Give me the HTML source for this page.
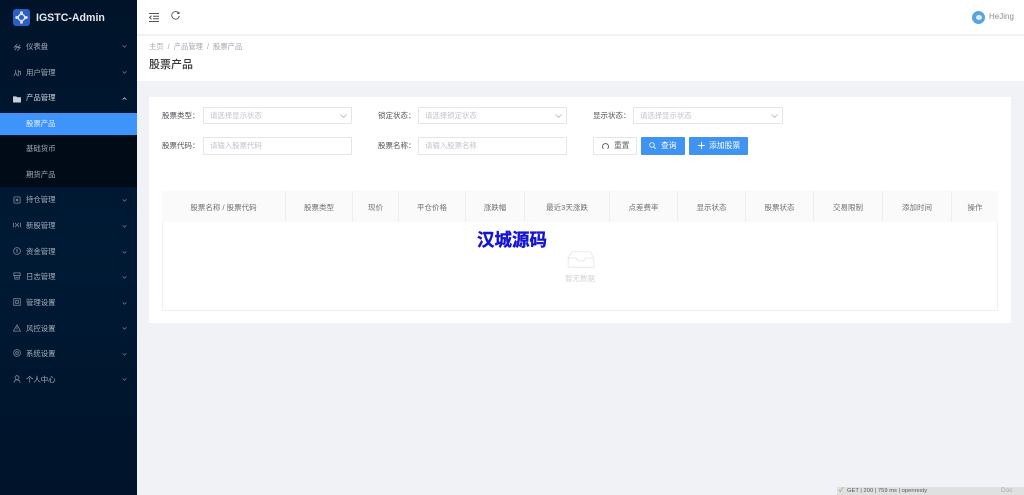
<!DOCTYPE html>
<html lang="zh-CN"><head><meta charset="utf-8"><title>股票产品</title>
<style>
*{box-sizing:border-box;margin:0;padding:0}
html,body{width:1024px;height:495px;overflow:hidden;background:#f0f2f5;font-family:"Liberation Sans","Noto Sans CJK SC",sans-serif}
#all{position:absolute;left:0;top:0;width:1024px;height:495px;filter:blur(.35px)}
.a{position:absolute;white-space:nowrap}
#side{position:absolute;left:0;top:0;width:137px;height:495px;background:linear-gradient(#001329,#001a35 50%,#00132a)}
.mi{position:absolute;left:26px;font-size:7.4px;line-height:12px;color:#a3adb9;white-space:nowrap}
.ic{position:absolute;left:13px;width:8px;height:8px;stroke:#7f8b99;fill:none;stroke-width:.9}
.ch{position:absolute;left:122px;width:5px;height:3px;stroke:#6f7c8b;fill:none;stroke-width:1}
.lb{position:absolute;font-size:7.5px;line-height:12px;color:#4f5257;white-space:nowrap}
.inp{position:absolute;height:17px;width:149px;background:#fff;border:1px solid #e3e5ea;border-radius:1px;font-size:7.4px;line-height:15px;padding-left:6px;color:#bfc3ca;white-space:nowrap}
.inp svg{position:absolute;right:4px;top:6px;width:7px;height:4px;stroke:#c0c4cc;fill:none}
.btn{position:absolute;top:137px;height:18px;border-radius:1px;font-size:7.8px;line-height:18px;white-space:nowrap;background:#3f94f2;color:#fff}
.th{position:absolute;top:191px;height:31px;border-right:1px solid #edeef0;font-size:7.5px;line-height:33px;text-align:center;color:#6c7076;white-space:nowrap;overflow:hidden}
</style></head><body><div id="all">
<div id="side">
<div class="a" style="left:13px;top:9px;width:17px;height:17px;border-radius:3px;background:#2d5fc4"></div>
<svg class="a" style="left:13px;top:9px" width="17" height="17" viewBox="0 0 17 17"><circle cx="8.5" cy="8.5" r="3.2" fill="none" stroke="#dfe8fa" stroke-width="1.4"/><circle cx="8.5" cy="3.8" r="1.5" fill="#dfe8fa"/><circle cx="8.5" cy="13.2" r="1.5" fill="#dfe8fa"/><circle cx="3.8" cy="8.5" r="1.5" fill="#dfe8fa"/><circle cx="13.2" cy="8.5" r="1.5" fill="#dfe8fa"/></svg>
<div class="a" style="left:36px;top:11px;font-size:10.6px;line-height:14px;font-weight:700;color:#e4e8ee">IGSTC-Admin</div>

<svg class="ic" style="top:43px" viewBox="0 0 9 9"><path d="M5 1 1.5 4.5 5 4 2 8M8 2 5.500 5 8 5 5 8.500"/></svg><div class="mi" style="top:41px">仪表盘</div>
<svg class="ch" style="top:45px" viewBox="0 0 6 4"><path d="M.5.5 3 3 5.500.5"/></svg>
<svg class="ic" style="top:69px" viewBox="0 0 9 9"><path d="M3 1V4L1 8M3 4 5 8M6 1V8M6 3H8.500V7"/></svg><div class="mi" style="top:67px">用户管理</div>
<svg class="ch" style="top:71px" viewBox="0 0 6 4"><path d="M.5.5 3 3 5.500.5"/></svg>
<svg class="ic" style="top:95px" viewBox="0 0 9 9"><path d="M.5 2H3.500L4.500 3H8.500V8H.5Z" fill="#c8d0da" stroke="#c8d0da"/></svg><div class="mi" style="top:92px;color:#d3d8df">产品管理</div>
<svg class="ch" style="top:97px;stroke:#d3d8df" viewBox="0 0 6 4"><path d="M.5 3.500 3 1 5.500 3.500"/></svg>

<div class="a" style="left:0;top:136px;width:137px;height:51px;background:#000b18"></div>
<div class="a" style="left:0;top:113px;width:137px;height:22px;background:#3f94fb"></div>
<div class="mi" style="top:118px;color:#eaf3ff">股票产品</div>
<div class="mi" style="top:143px">基础货币</div>
<div class="mi" style="top:169px">期货产品</div>

<svg class="ic" style="top:196px" viewBox="0 0 9 9"><rect x="1" y="1" width="7" height="7" rx="1"/><path d="M3 3 6 6M6 3 3 6"/></svg><div class="mi" style="top:194px">持仓管理</div>
<svg class="ch" style="top:199px" viewBox="0 0 6 4"><path d="M.5.5 3 3 5.500.5"/></svg>
<svg class="ic" style="top:221px" viewBox="0 0 9 9"><path d="M.5 2V7M2.500 2 4 4.500 2.500 7M8.500 2V7M6.500 2 5 4.500 6.500 7"/></svg><div class="mi" style="top:220px">新股管理</div>
<svg class="ch" style="top:225px" viewBox="0 0 6 4"><path d="M.5.5 3 3 5.500.5"/></svg>
<svg class="ic" style="top:247px" viewBox="0 0 9 9"><circle cx="4.500" cy="4.500" r="3.800"/><path d="M4.500 2.500V6.500M3.500 3.500H5.500"/></svg><div class="mi" style="top:246px">资金管理</div>
<svg class="ch" style="top:251px" viewBox="0 0 6 4"><path d="M.5.5 3 3 5.500.5"/></svg>
<svg class="ic" style="top:272px" viewBox="0 0 9 9"><path d="M1 1H8V4H1ZM2 4V8H7V4M3 6H6"/></svg><div class="mi" style="top:271px">日志管理</div>
<svg class="ch" style="top:276px" viewBox="0 0 6 4"><path d="M.5.5 3 3 5.500.5"/></svg>
<svg class="ic" style="top:298px" viewBox="0 0 9 9"><rect x=".8" y=".8" width="7.400" height="7.400"/><path d="M3 3H6V6H3Z"/></svg><div class="mi" style="top:297px">管理设置</div>
<svg class="ch" style="top:302px" viewBox="0 0 6 4"><path d="M.5.5 3 3 5.500.5"/></svg>
<svg class="ic" style="top:324px" viewBox="0 0 9 9"><path d="M4.500 1 8.500 8H.5ZM4.500 3.500V6"/></svg><div class="mi" style="top:323px">风控设置</div>
<svg class="ch" style="top:327px" viewBox="0 0 6 4"><path d="M.5.5 3 3 5.500.5"/></svg>
<svg class="ic" style="top:349px" viewBox="0 0 9 9"><circle cx="4.500" cy="4.500" r="3.800"/><circle cx="4.500" cy="4.500" r="1.500"/></svg><div class="mi" style="top:348px">系统设置</div>
<svg class="ch" style="top:353px" viewBox="0 0 6 4"><path d="M.5.5 3 3 5.500.5"/></svg>
<svg class="ic" style="top:375px" viewBox="0 0 9 9"><circle cx="4.500" cy="3" r="2.200"/><path d="M1 8.500C1.500 6 3 5.500 4.500 5.500S7.500 6 8 8.500"/></svg><div class="mi" style="top:374px">个人中心</div>
<svg class="ch" style="top:378px" viewBox="0 0 6 4"><path d="M.5.5 3 3 5.500.5"/></svg>
</div>

<div class="a" style="left:137px;top:0;width:887px;height:35px;background:#fff;border-bottom:1px solid #f0f1f3"></div>
<svg class="a" style="left:149px;top:13px" width="10" height="9" viewBox="0 0 10 9" fill="none" stroke="#555" stroke-width="1"><path d="M0 .5H10M4 3.200H10M4 5.800H10M0 8.500H10M2.500 2.800 .5 4.500 2.500 6.200"/></svg>
<svg class="a" style="left:171px;top:11px" width="9" height="9" viewBox="0 0 9 9" fill="none" stroke="#555" stroke-width=".9"><path d="M7.700 2.200A3.800 3.800 0 1 0 8.300 5"/><path d="M8 .6V2.600H6"/></svg>
<div class="a" style="left:972px;top:11px;width:13px;height:13px;border-radius:50%;background:#5ba3dc"></div>
<div class="a" style="left:976px;top:15px;width:6px;height:5px;border-radius:50%;background:#dcecf8"></div>
<div class="a" style="left:989px;top:11px;font-size:8px;line-height:12px;color:#8a8d92">HeJing</div>

<div class="a" style="left:137px;top:36px;width:887px;height:45px;background:#fff"></div>
<div class="a" style="left:149px;top:41px;font-size:7.300px;line-height:11px;color:#a3a6ab">主页 &nbsp;/&nbsp; 产品管理 &nbsp;/&nbsp; 股票产品</div>
<div class="a" style="left:149px;top:58px;font-size:11px;line-height:14px;font-weight:500;color:#33363a">股票产品</div>

<div class="a" style="left:149px;top:97px;width:862px;height:226px;background:#fff"></div>
<div class="lb" style="left:162px;top:110px">股票类型：</div>
<div class="inp" style="left:203px;top:107px">请选择显示状态<svg viewBox="0 0 7 4"><path d="M.5.5 3.500 3.500 6.500.5"/></svg></div>
<div class="lb" style="left:378px;top:110px">锁定状态：</div>
<div class="inp" style="left:418px;top:107px">请选择锁定状态<svg viewBox="0 0 7 4"><path d="M.5.5 3.500 3.500 6.500.5"/></svg></div>
<div class="lb" style="left:593px;top:110px">显示状态：</div>
<div class="inp" style="left:633px;top:107px;width:150px">请选择显示状态<svg viewBox="0 0 7 4"><path d="M.5.5 3.500 3.500 6.500.5"/></svg></div>
<div class="lb" style="left:162px;top:140px">股票代码：</div>
<div class="inp" style="left:203px;top:137px;height:18px;line-height:16px">请输入股票代码</div>
<div class="lb" style="left:378px;top:140px">股票名称：</div>
<div class="inp" style="left:418px;top:137px;height:18px;line-height:16px">请输入股票名称</div>

<div class="btn" style="left:593px;width:44px;background:#fff;border:1px solid #e3e5ea;color:#606266;line-height:16px;padding-left:20px">重置</div>
<svg class="a" style="left:602px;top:142px" width="7" height="8" viewBox="0 0 7 8" fill="none" stroke="#555" stroke-width=".9"><path d="M1.500 6.800A3 3 0 1 1 5.500 6.800"/></svg>
<div class="btn" style="left:641px;width:44px;padding-left:20px">查询</div>
<svg class="a" style="left:649px;top:142px" width="7" height="7" viewBox="0 0 7 7" fill="none" stroke="#e6f1ff" stroke-width=".9"><circle cx="3" cy="3" r="2.300"/><path d="M4.800 4.800 6.800 6.800"/></svg>
<div class="btn" style="left:689px;width:59px;padding-left:20px">添加股票</div>
<svg class="a" style="left:698px;top:142px" width="7" height="7" viewBox="0 0 7 7" stroke="#fff" stroke-width="1"><path d="M3.500 0V7M0 3.500H7"/></svg>

<div class="a" style="left:162px;top:191px;width:836px;height:120px;border:1px solid #eff0f2;border-top:0"></div>
<div class="a" style="left:162px;top:191px;width:836px;height:31px;background:#fafafa"></div>
<div class="th" style="left:162px;width:124px">股票名称 / 股票代码</div>
<div class="th" style="left:286px;width:67px">股票类型</div>
<div class="th" style="left:353px;width:46px">现价</div>
<div class="th" style="left:399px;width:67px">平仓价格</div>
<div class="th" style="left:466px;width:59px">涨跌幅</div>
<div class="th" style="left:525px;width:85px">最近3天涨跌</div>
<div class="th" style="left:610px;width:68px">点差费率</div>
<div class="th" style="left:678px;width:68px">显示状态</div>
<div class="th" style="left:746px;width:68px">股票状态</div>
<div class="th" style="left:814px;width:69px">交易限制</div>
<div class="th" style="left:883px;width:69px">添加时间</div>
<div class="th" style="left:952px;width:46px;border-right:0">操作</div>

<svg class="a" style="left:566px;top:248px" width="30" height="22" viewBox="0 0 32 24" fill="none" stroke="#e6e7ea" stroke-width="1"><path d="M6 4H26L30 11V21H2V11ZM2 11H11L13 14H19L21 11H30"/></svg>
<div class="a" style="left:565px;top:273px;font-size:7.5px;line-height:12px;color:#d0d2d6">暂无数据</div>
<div class="a" style="left:477px;top:230px;font-size:17.500px;line-height:20px;font-weight:700;color:#1414d2;-webkit-text-stroke:.4px #1414d2">汉城源码</div>

<div class="a" style="left:837px;top:487px;width:187px;height:8px;background:#dfe1e0"></div>
<div class="a" style="left:839px;top:487px;font-size:6.500px;line-height:8px;color:#5a9e3a">✓</div>
<div class="a" style="left:847px;top:487px;font-size:5.800px;line-height:8px;color:#555">GET | 200 | 759 ms | openresty</div>
<div class="a" style="left:1001px;top:487px;font-size:6.500px;line-height:8px;color:#aaa">Doc</div>
</div></body></html>
